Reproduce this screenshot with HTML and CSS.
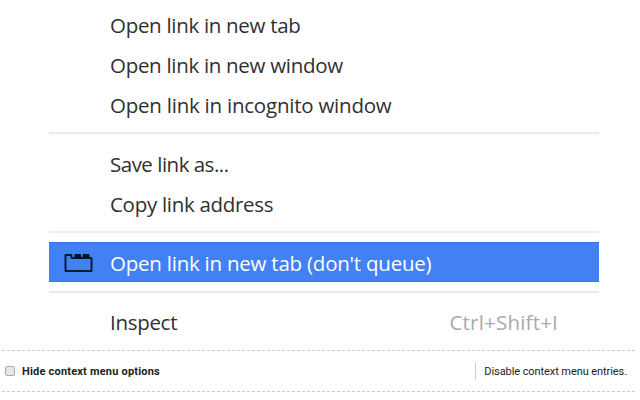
FILE: index.html
```html
<!DOCTYPE html>
<html lang="en">
<head>
<meta charset="utf-8">
<title>Context menu options</title>
<link rel="stylesheet" href="styles.css">
</head>
<body>
<div class="menu">
  <div class="item"><span class="label">Open link in new tab</span></div>
  <div class="item"><span class="label">Open link in new window</span></div>
  <div class="item"><span class="label wide">Open link in incognito window</span></div>
  <div class="line"></div>
  <div class="item"><span class="label save">Save link as...</span></div>
  <div class="item"><span class="label">Copy link address</span></div>
  <div class="line before-active"></div>
  <div class="item active">
    <svg class="icon" width="30" height="20" viewBox="0 0 30 20"><path d="M1.5 2h6v3h20v13h-26z" fill="none" stroke="#0b1830" stroke-width="1.9" stroke-linejoin="round"/><path d="M10.5 2q0-1 1-1h4.5q1 0 1 1v3h-6.500zM18.500 2q0-1 1-1h5q1 0 1 1v3h-7z" fill="#071020"/></svg>
    <span class="label wide">Open link in new tab (don't queue)</span>
  </div>
  <div class="line after-active"></div>
  <div class="item last"><span class="label">Inspect</span><span class="key">Ctrl+Shift+I</span></div>
</div>
<div class="option">
  <span class="box"></span><b class="name">Hide context menu options</b>
  <span class="desc">Disable context menu entries.</span>
</div>
</body>
</html>
```
FILE: styles.css
```css
body { margin: 0; width: 640px; height: 400px; overflow: hidden; background: #fff; }
.menu { box-sizing: border-box; height: 350px; padding: 6px 41px 0 49px; font: 20.5px/39px "Open Sans", sans-serif; color: #303030; }
.item { display: flex; height: 40px; padding-left: 61px; white-space: nowrap; }
.label { letter-spacing: -0.3px; }
.wide { letter-spacing: -0.23px; }
.save { letter-spacing: -0.5px; }
.line { height: 2px; margin: 6px 0 11px; background: #ebebeb; }
.before-active { margin-bottom: 9px; }
.after-active { margin: 9px 0 11px; }
.active { background: #4281f4; box-shadow: inset 0 1px #3975ea, inset 0 -1px #3975ea; color: #fff; padding-left: 15px; line-height: 43px; }
.last { line-height: 37px; }
.icon { width: 30px; margin: 11px 16px 0 0; }
.key { margin-left: auto; padding-right: 41px; letter-spacing: 0.2px; color: #aaa; }
.option { display: flex; align-items: center; height: 40px; margin: 0 5px 0 2px; border: dashed #ccc; border-width: 1px 0; font: 11px Roboto, sans-serif; color: #222; }
.box { width: 8px; height: 8px; margin: 0 7px 0 3px; border: 1px solid #aaa; border-radius: 2px; background: #e6e6e6; }
.name { letter-spacing: 0.2px; }
.desc { margin-left: auto; padding: 2px 8px; border-left: 1px solid #ccc; letter-spacing: -0.08px; }
```
